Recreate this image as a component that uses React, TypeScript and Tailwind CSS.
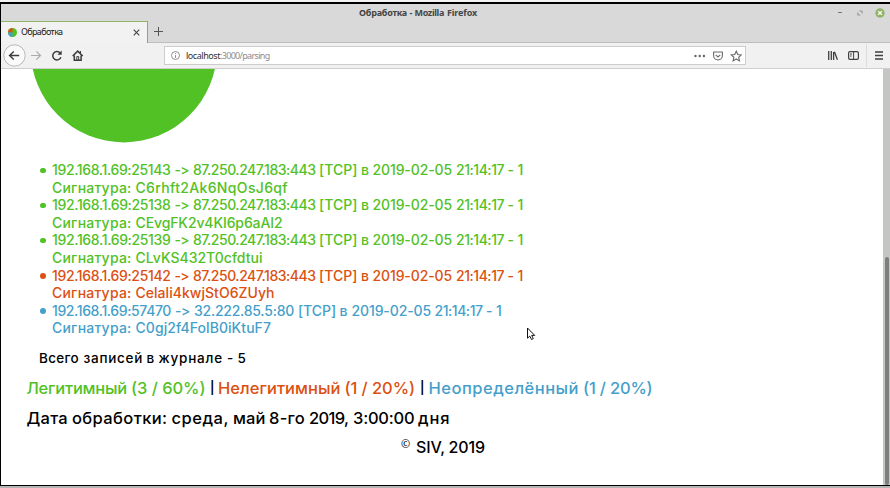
import { useLayoutEffect, useRef } from "react";

type Word = [text: string, start: number, end: number];

const GREEN = "text-[#52c125]";
const ORANGE = "text-[#dc5010]";
const BLUE = "text-[#459fca]";

/* One word, tracked so that its advance equals the given width. */
function Fitted({ text, width, gap }: { text: string; width: number; gap: number }) {
  const ref = useRef<HTMLSpanElement>(null);
  useLayoutEffect(() => {
    const el = ref.current;
    if (!el) return;
    el.style.letterSpacing = "0px";
    const natural = el.getBoundingClientRect().width;
    el.style.letterSpacing = `${(width - natural) / text.length}px`;
  }, [text, width]);
  return (
    <span className="shrink-0" style={{ width, marginLeft: gap }}>
      <span ref={ref} className="inline-block whitespace-pre">{text}</span>
    </span>
  );
}

function Line({ words, origin, className = "" }: { words: Word[]; origin: number; className?: string }) {
  return (
    <div className={`flex ${className}`}>
      {words.map(([text, start, end], i) => (
        <Fitted key={i} text={text} width={end - start} gap={start - (i ? words[i - 1][2] : origin)} />
      ))}
    </div>
  );
}

const local = (port: string): Word[] => [
  [`192.168.1.69:${port}`, 52, 170.5],
  ["->", 174.5, 189],
  ["87.250.247.183:443", 193, 315.5],
  ["[TCP]", 319, 357.5],
  ["в", 361, 369],
  ["2019-02-05", 372.5, 452],
  ["21:14:17", 456, 504],
  ["-", 507.5, 514],
  ["1", 517.5, 524],
];

const records: { color: string; words: Word[]; signature: string; end: number }[] = [
  { color: GREEN, words: local("25143"), signature: "C6rhft2Ak6NqOsJ6qf", end: 288 },
  { color: GREEN, words: local("25138"), signature: "CEvgFK2v4KI6p6aAI2", end: 282.5 },
  { color: GREEN, words: local("25139"), signature: "CLvKS432T0cfdtui", end: 262.5 },
  { color: ORANGE, words: local("25142"), signature: "Celali4kwjStO6ZUyh", end: 274.5 },
  {
    color: BLUE,
    words: [
      ["192.168.1.69:57470", 52, 171],
      ["->", 175, 190],
      ["32.222.85.5:80", 194, 294],
      ["[TCP]", 298, 336],
      ["в", 339.5, 348],
      ["2019-02-05", 351.5, 431],
      ["21:14:17", 434.5, 482.5],
      ["-", 486, 493],
      ["1", 496, 502.5],
    ],
    signature: "C0gj2f4FolB0iKtuF7",
    end: 271,
  },
];

function TitleBar() {
  return (
    <div className="flex h-[17px] shrink-0 items-center bg-[#d9d9d9] pl-[358px] pr-[5px] font-['Noto_Sans','Open_Sans',sans-serif] text-[9px] font-bold text-[#454545]">
      <Line origin={0} words={[["Обработка", 0, 48], ["-", 50.5, 53.5], ["Mozilla", 55.5, 85], ["Firefox", 88, 118]]} />
      <div className="ml-auto flex items-center">
        <span className="h-px w-[4px] bg-[#777]" />
        <svg className="ml-[15px]" width="6" height="6" viewBox="0 0 6 6" fill="none" stroke="#888" strokeWidth=".9">
          <path d="M2.5 1h2.6v2.5M3.3 5H.8V2.5" />
        </svg>
        <svg className="ml-[12px]" width="10" height="10" viewBox="0 0 10 10">
          <circle cx="5" cy="5" r="4.7" fill="#8fb567" />
          <path d="M3.2 3.2l3.6 3.6M6.8 3.2L3.2 6.8" stroke="#fff" strokeWidth="1.3" />
        </svg>
      </div>
    </div>
  );
}

function Tabs() {
  return (
    <div className="flex h-[22px] shrink-0 bg-[#d9d9d9] font-['Noto_Sans','Open_Sans',sans-serif] text-[9px] text-[#202020]">
      <div className="flex w-[147px] items-center border-r border-t-[1.5px] border-r-[#999] border-t-[#8fb767] bg-[#f2f2f2] pl-[7px] pr-[7px]">
        <svg width="9" height="9" viewBox="0 0 10 10">
          <circle cx="5" cy="5" r="5" fill="#52c125" />
          <path d="M5 5V0A5 5 0 0 0 0 5Z" fill="#dc5010" />
          <path d="M5 5H0a5 5 0 0 0 5 5Z" fill="#459fca" />
        </svg>
        <Line className="-mt-px" origin={-4} words={[["Обработка", 0, 41.5]]} />
        <svg className="ml-auto" width="7" height="7" viewBox="0 0 7 7" stroke="#444" strokeWidth="1.1">
          <path d="M.7.7l5.6 5.6M6.3.7L.7 6.3" />
        </svg>
      </div>
      <div className="flex flex-1 items-center border-b border-[#bdbdbd] pl-[6px]">
        <svg width="9" height="9" viewBox="0 0 9 9" stroke="#555" strokeWidth="1">
          <path d="M4.5 0v9M0 4.5h9" />
        </svg>
      </div>
    </div>
  );
}

function Toolbar() {
  return (
    <div className="flex h-[26px] shrink-0 items-center border-b border-[#cfcfcf] bg-[#f1f1f1]">
      <svg className="shrink-0" width="163" height="25" viewBox="1 43 163 25" fill="none" stroke="#3c3c3c">
        <circle cx="14.5" cy="55.5" r="10.7" fill="#fafafa" stroke="#b0b0b0" strokeWidth=".9" />
        <path d="M19.2 55.5H9.5m4.3-4.1l-4.3 4.1 4.3 4.1" strokeWidth="1.4" />
        <path d="M31 55.5h9.5m-4.2-4.1l4.2 4.1-4.2 4.1" stroke="#aaa" strokeWidth="1.2" />
        <path d="M60.2 53A4.2 4.2 0 1 0 60.9 57.2" strokeWidth="1.5" />
        <path d="M61.7 50.5v4.2h-4.3z" fill="#3c3c3c" stroke="none" />
        <path d="M72.7 56l5-4.9 5 4.9M74.3 55.5v4.7h6.8v-4.7" strokeWidth="1.5" />
        <path d="M76.8 60v-3.4h1.9V60" strokeWidth="1" />
        <path d="M80.4 51v2.3" strokeWidth="1.2" />
      </svg>
      <div className="flex h-[19px] w-[582px] shrink-0 items-center border border-[#cdcdcd] bg-white px-[6px] font-['Noto_Sans','Open_Sans',sans-serif] text-[9px]">
        <svg width="9" height="9" viewBox="0 0 9 9" fill="none" stroke="#777" strokeWidth=".8">
          <circle cx="4.5" cy="4.5" r="4" />
          <path d="M4.5 2v1M4.5 4v3" />
        </svg>
        <div className="flex pl-[6px] text-[#303030]">
          <Fitted text="localhost" width={34} gap={0} />
          <div className="text-[#8d8d8d]"><Line origin={0} words={[[":3000/parsing", 0, 49.5]]} /></div>
        </div>
        <svg className="ml-auto -mr-[3px]" width="50" height="14" viewBox="692 48.5 50 14" fill="none" stroke="#6b6b6b" strokeWidth="1.1">
          <g fill="#666" stroke="none">
            <circle cx="695.5" cy="55.5" r="1.2" />
            <circle cx="699.7" cy="55.5" r="1.2" />
            <circle cx="703.9" cy="55.5" r="1.2" />
          </g>
          <path d="M713.6 51.5h8.8v3.6a4.4 4.4 0 0 1-8.8 0z" strokeLinejoin="round" />
          <path d="M715.7 54.3l2.3 2.1 2.3-2.1" />
          <path d="M736.3 50.7l1.5 3.3 3.6.4-2.7 2.4.8 3.6-3.2-1.9-3.2 1.9.8-3.6-2.7-2.4 3.6-.4z" />
        </svg>
      </div>
      <svg className="ml-auto shrink-0" width="66" height="25" viewBox="824 43 66 25" fill="none" stroke="#404040">
        <path d="M828.7 51v9M831.3 51v9M833.6 52v8M834.4 51.8l3 8" strokeWidth="1.3" />
        <rect x="848.6" y="51.6" width="9.8" height="7.8" rx="1.4" strokeWidth="1.2" />
        <path d="M853.6 52v7.5M850 54h2M850 56h1.6" strokeWidth="1" />
        <path d="M866.5 44v23" stroke="#dcdcdc" />
        <path d="M875 52h8M875 55.5h8M875 59h8" strokeWidth="1.3" />
      </svg>
    </div>
  );
}

export default function App() {
  return (
    <div className="relative flex h-[488px] w-[890px] flex-col overflow-hidden bg-[#b5b5b5]">
      <div className="h-[2px] shrink-0 bg-[#f3f3f3]" />
      <div className="flex h-[484px] shrink-0 flex-col border-b border-l border-t-2 border-black bg-white">
        <TitleBar />
        <Tabs />
        <Toolbar />
        <div className="flex min-h-0 flex-1">
          <main className="min-w-0 flex-1 font-[Inter,'Noto_Sans',sans-serif] font-medium text-black [font-variant-ligatures:none]">
            <svg className="block" width="880" height="92" viewBox="1 69 880 92">
              <circle cx="123.8" cy="49.2" r="93.2" fill="#52c125" />
            </svg>
            <ul className="text-[14px] leading-[17.6px]">
              {records.map((record, i) => (
                <li key={i} className={`flex ${record.color}`}>
                  <span className="ml-[39px] mr-[6.5px] mt-[6.5px] h-[5.5px] w-[5.5px] rounded-full bg-current" />
                  <div>
                    <Line origin={52} words={record.words} />
                    <Line origin={52} words={[["Сигнатура:", 52, 131.5], [record.signature, 135.5, record.end]]} />
                  </div>
                </li>
              ))}
            </ul>
            <Line
              className="mt-[12px] text-[13.5px] leading-[18px]"
              origin={1}
              words={[["Всего", 39, 79], ["записей", 83.5, 143], ["в", 146.5, 155], ["журнале", 158.5, 223], ["-", 227, 233], ["5", 237.5, 246]]}
            />
            <div className="mt-[10px] flex text-[16.5px] leading-[22px]">
              <Line className={GREEN} origin={1} words={[["Легитимный", 26.5, 127], ["(3 / 60%)", 131, 205.5]]} />
              <Line className="text-[12.5px] font-semibold" origin={205.5} words={[["|", 210, 214]]} />
              <Line className={ORANGE} origin={214} words={[["Нелегитимный", 218, 340.5], ["(1 / 20%)", 344.5, 415]]} />
              <Line className="text-[12.5px] font-semibold" origin={415} words={[["|", 420, 424]]} />
              <Line className={BLUE} origin={424} words={[["Неопределённый", 428.5, 579], ["(1 / 20%)", 583, 652.5]]} />
            </div>
            <Line
              className="mt-[8px] text-[16.5px] leading-[22px]"
              origin={1}
              words={[["Дата", 26.5, 68], ["обработки:", 72, 167.5], ["среда,", 171.5, 229], ["май", 233, 265.5], ["8-го", 269, 305], ["2019,", 309, 348.5], ["3:00:00", 353, 414.5], ["дня", 418, 450.5]]}
            />
            <div className="mt-[7px] flex text-[16px] leading-[22px]">
              <span className="ml-[400px] -mt-[3px] w-[15px] font-['Noto_Sans',sans-serif] text-[11px] font-normal">©</span>
              <Line origin={416} words={[["SIV,", 416, 445], ["2019", 448.5, 485]]} />
            </div>
          </main>
          <div className="flex w-[7px] shrink-0 flex-col items-center bg-[#c4c6c4] pt-[188px]">
            <div className="w-[4px] flex-1 rounded-full bg-[#7b7f7e]" />
          </div>
        </div>
      </div>
      <svg className="absolute left-[526px] top-[327px]" width="10" height="14" viewBox="0 0 10 14">
        <path d="M1.5 1v10.2l2.3-2.1 1.7 3.4 1.8-.9-1.6-3.2h3z" fill="#fff" stroke="#111" strokeWidth="1" />
      </svg>
    </div>
  );
}
